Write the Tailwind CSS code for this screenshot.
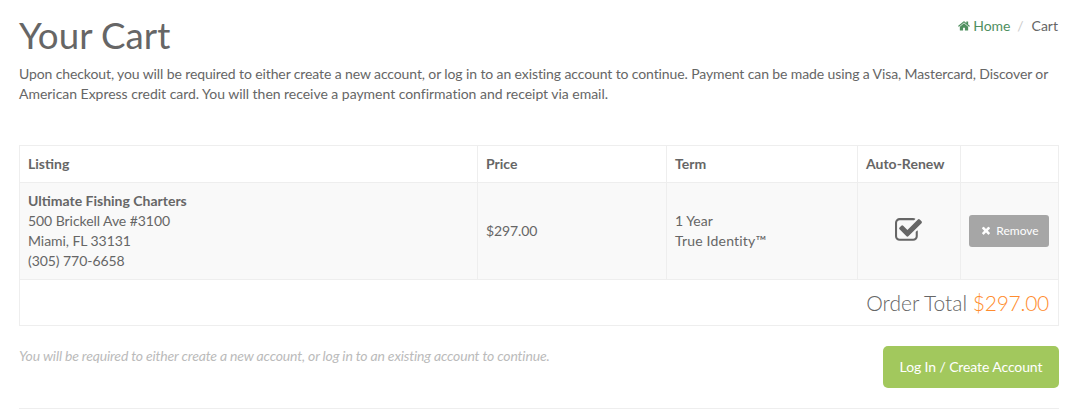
<!DOCTYPE html>
<html lang="en">
<head>
    <meta charset="UTF-8">
    <title>Your Cart</title>
    <script src="https://cdn.jsdelivr.net/npm/@tailwindcss/browser@4"></script>
</head>
<body class="bg-white font-['Lato',sans-serif] text-[14px] leading-[20px] text-[#666666] overflow-hidden">
    <div class="pl-[19px] pr-[20px] h-[409px]">
        <!-- page heading -->
        <div class="flex justify-between items-start pt-[15px]">
            <h1 class="text-[36.7px] leading-[40px] font-normal">Your Cart</h1>
            <nav class="flex items-center pt-[1px] pr-[1px]">
                <svg class="w-[12px] h-[14px] mr-[3px] fill-[#4f8f5f]" viewBox="0 0 1664 1792"><path d="M1408 992v480q0 26-19 45t-45 19h-384v-384h-256v384h-384q-26 0-45-19t-19-45v-480q0-1 .5-3t.5-3l575-474 575 474q1 2 1 6zm223-69l-62 74q-8 9-21 11h-3q-13 0-21-7l-692-577-692 577q-12 8-24 7-13-2-21-11l-62-74q-8-10-7-23.5t11-21.5l719-599q32-26 76-26t76 26l244 204v-195q0-14 9-23t23-9h192q14 0 23 9t9 23v408l219 182q10 8 11 21.5t-7 23.5z"/></svg>
                <a href="#" class="text-[#4f8f5f] tracking-[-0.11px]">Home</a>
                <span class="pl-[7px] pr-[8px] text-[#cccccc]">/</span>
                <span>Cart</span>
            </nav>
        </div>
        <p class="mt-[9px]"><span class="tracking-[-0.11px]">Upon checkout, you will be required to either create a new account, or log in to an existing account to continue. Payment can be made using a Visa, Mastercard, Discover or</span> <span class="tracking-[-0.03px]">American Express credit card. You will then receive a payment confirmation and receipt via email.</span></p>

        <!-- cart table -->
        <table class="mt-[41px] w-[1039px] table-fixed border-collapse border border-[#eeeeee]">
            <colgroup>
                <col class="w-[458px]">
                <col class="w-[189px]">
                <col class="w-[191px]">
                <col class="w-[103px]">
                <col class="w-[98px]">
            </colgroup>
            <thead>
                <tr class="h-[37px]">
                    <th class="border border-[#eeeeee] px-[8px] text-left font-bold">Listing</th>
                    <th class="border border-[#eeeeee] px-[8px] text-left font-bold">Price</th>
                    <th class="border border-[#eeeeee] px-[8px] text-left font-bold">Term</th>
                    <th class="border border-[#eeeeee] px-[8px] text-left font-bold">Auto-Renew</th>
                    <th class="border border-[#eeeeee] px-[8px]"></th>
                </tr>
            </thead>
            <tbody>
                <tr class="h-[97px] bg-[#f9f9f9]">
                    <td class="border border-[#eeeeee] px-[8px] tracking-[-0.06px]"><strong class="font-bold tracking-normal">Ultimate Fishing Charters</strong><br>500 Brickell Ave #3100<br>Miami, FL 33131<br>(305) 770-6658</td>
                    <td class="border border-[#eeeeee] px-[8px] tracking-[-0.11px]">$297.00</td>
                    <td class="border border-[#eeeeee] px-[8px]">1 Year<br><span class="tracking-[0.2px]">True Identity™</span></td>
                    <td class="border border-[#eeeeee] px-[8px]">
                        <svg class="block mx-auto w-[29px] h-[29px] mb-[2px] fill-[#666666]" viewBox="0 0 1792 1792"><path d="M1408 930v318q0 119-84.5 203.5t-203.5 84.5h-832q-119 0-203.5-84.5t-84.5-203.5v-832q0-119 84.5-203.5t203.5-84.5h832q63 0 117 25 15 7 18 23 3 17-9 29l-49 49q-10 10-23 10-3 0-9-2-23-6-45-6h-832q-66 0-113 47t-47 113v832q0 66 47 113t113 47h832q66 0 113-47t47-113v-254q0-13 9-22l64-64q10-10 23-10 6 0 12 3 20 8 20 29zm231-489l-814 814q-24 24-57 24t-57-24l-430-430q-24-24-24-57t24-57l110-110q24-24 57-24t57 24l263 263 647-647q24-24 57-24t57 24l110 110q24 24 24 57t-24 57z"/></svg>
                    </td>
                    <td class="border border-[#eeeeee] px-[8px]">
                        <a href="#" class="flex items-center justify-center w-[80px] h-[32px] pl-[2px] rounded-[3px] bg-[#a6a6a6] text-white text-[12px]">
                            <svg class="w-[10px] h-[12px] mr-[5px] fill-white" viewBox="0 0 1408 1792"><path d="M1298 1214q0 40-28 68l-136 136q-28 28-68 28t-68-28l-294-294-294 294q-28 28-68 28t-68-28l-136-136q-28-28-28-68t28-68l294-294-294-294q-28-28-28-68t28-68l136-136q28-28 68-28t68 28l294 294 294-294q28-28 68-28t68 28l136 136q28 28 28 68t-28 68l-294 294 294 294q28 28 28 68z"/></svg>
                            Remove
                        </a>
                    </td>
                </tr>
                <tr class="h-[46px]">
                    <td colspan="5" class="border border-[#eeeeee] px-[9px] text-right text-[21px] font-light">Order Total <span class="text-[#ff8c2e] tracking-[-0.25px]">$297.00</span></td>
                </tr>
            </tbody>
        </table>

        <!-- checkout row -->
        <div class="flex justify-between items-start mt-[20px]">
            <p class="text-[14px] italic text-[#bbbbbb] tracking-[-0.17px]">You will be required to either create a new account, or log in to an existing account to continue.</p>
            <a href="#" class="flex items-center justify-center w-[176px] h-[42px] rounded-[5px] bg-[#a2c85d] text-white tracking-[-0.11px]">Log In / Create Account</a>
        </div>
        <hr class="mt-[20px] border-[#eeeeee]">
    </div>
</body>
</html>
